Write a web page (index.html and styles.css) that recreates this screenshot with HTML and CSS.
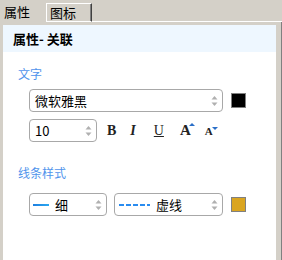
FILE: index.html
```html
<!DOCTYPE html>
<html lang="zh-CN">
<head>
    <meta charset="UTF-8">
    <title>属性面板</title>
    <link rel="stylesheet" href="styles.css">
</head>
<body>
    <div class="tabs">
        <div class="tab active">属性</div>
        <div class="tab">图标</div>
        <div class="tab-fill"></div>
    </div>

    <div class="frame">
        <div class="panel">
            <div class="panel-head">属性- 关联</div>

            <!-- 文字 -->
            <div class="section-title">文字</div>
            <div class="row row-font">
                <div class="select font-select">
                    <span class="select-text">微软雅黑</span>
                    <span class="spin"><svg width="7" height="12" viewBox="0 0 7 12"><path d="M3.5 1 L6.5 4.5 L0.5 4.5 Z" fill="#b0b0b0"/><path d="M0.5 7.5 L6.5 7.5 L3.5 11 Z" fill="#b0b0b0"/></svg></span>
                </div>
                <span class="swatch black"></span>
            </div>
            <div class="row row-style">
                <div class="select size-select">
                    <span class="select-text">10</span>
                    <span class="spin"><svg width="7" height="12" viewBox="0 0 7 12"><path d="M3.5 1 L6.5 4.5 L0.5 4.5 Z" fill="#b0b0b0"/><path d="M0.5 7.5 L6.5 7.5 L3.5 11 Z" fill="#b0b0b0"/></svg></span>
                </div>
                <span class="fmt fmt-b">B</span>
                <span class="fmt fmt-i">I</span>
                <span class="fmt fmt-u">U</span>
                <span class="fmt fmt-up">A<i class="tri up"></i></span>
                <span class="fmt fmt-down">A<i class="tri down"></i></span>
            </div>

            <!-- 线条样式 -->
            <div class="section-title line-title">线条样式</div>
            <div class="row row-line">
                <div class="select width-select">
                    <span class="line solid"></span>
                    <span class="select-text">细</span>
                    <span class="spin"><svg width="7" height="12" viewBox="0 0 7 12"><path d="M3.5 1 L6.5 4.5 L0.5 4.5 Z" fill="#b0b0b0"/><path d="M0.5 7.5 L6.5 7.5 L3.5 11 Z" fill="#b0b0b0"/></svg></span>
                </div>
                <div class="select dash-select">
                    <span class="line dashed"></span>
                    <span class="select-text">虚线</span>
                    <span class="spin"><svg width="7" height="12" viewBox="0 0 7 12"><path d="M3.5 1 L6.5 4.5 L0.5 4.5 Z" fill="#b0b0b0"/><path d="M0.5 7.5 L6.5 7.5 L3.5 11 Z" fill="#b0b0b0"/></svg></span>
                </div>
                <span class="swatch gold"></span>
            </div>
        </div>
    </div>
</body>
</html>
```

FILE: styles.css
```css
body {
    margin: 0;
    width: 282px;
    height: 260px;
    overflow: hidden;
    background-color: #d4d0c8;
    font-family: "Noto Sans CJK SC", "Liberation Sans", sans-serif;
    font-size: 12px;
    color: #000;
}

/* Tabs */
.tabs {
    display: flex;
    align-items: flex-start;
    height: 22px;
}

.tab {
    box-sizing: border-box;
    width: 46px;
    height: 19px;
    margin-top: 3px;
    padding-left: 3px;
    font-size: 13px;
    line-height: 17px;
    border-top: 1px solid #fff;
    border-left: 1px solid #fff;
    border-right: 1px solid #404040;
    border-bottom: 1px solid #fff;
    box-shadow: inset -1px 0 #808080;
}

.tab.active {
    margin-top: 0;
    height: 22px;
    padding: 3px 0 0 4px;
    line-height: 18px;
    border: none;
    box-shadow: none;
}

.tab-fill {
    flex: 1;
    height: 22px;
    box-sizing: border-box;
    border-bottom: 1px solid #fff;
}

/* Frame around the panel */
.frame {
    box-sizing: border-box;
    height: 238px;
    padding: 3px 5px 0 3px;
    border-right: 1px solid #808080;
    display: flex;
}

.panel {
    flex: 1;
    background-color: #fff;
}

.panel-head {
    height: 27px;
    line-height: 27px;
    padding-left: 10px;
    background-color: #eef7ff;
    font-size: 13px;
    font-weight: bold;
}

.section-title {
    margin: 13px 0 0 15px;
    line-height: 18px;
    color: #5094ec;
}

.line-title {
    margin-top: 22px;
}

.row {
    display: flex;
    align-items: center;
    padding-left: 26px;
}

.row-font {
    margin-top: 6px;
}

.row-style {
    margin-top: 7px;
}

.row-line {
    margin-top: 11px;
}

/* Spin / combo boxes */
.select {
    box-sizing: border-box;
    height: 23px;
    display: flex;
    align-items: center;
    padding-left: 5px;
    border: 1px solid #a8a8a8;
    border-radius: 4px;
    background-color: #fff;
}

.select-text {
    flex: 1;
    font-size: 13px;
}

.spin {
    display: flex;
    width: 7px;
    margin-right: 4px;
}

.font-select {
    width: 194px;
}

.size-select {
    width: 68px;
}

.width-select {
    width: 78px;
    padding-left: 3px;
}

.dash-select {
    width: 109px;
    margin-left: 7px;
    padding-left: 4px;
}

.line {
    display: inline-block;
    height: 2px;
    margin-right: 6px;
}

.line.solid {
    width: 16px;
    background: linear-gradient(to right, #1e7ee0, #2aa8f0);
}

.line.dashed {
    width: 31px;
    background: repeating-linear-gradient(to right, #2a8cf0 0, #2a8cf0 5px, transparent 5px, transparent 7px);
}

.swatch {
    box-sizing: border-box;
    width: 15px;
    height: 15px;
    margin-left: 8px;
    border: 1px solid #808080;
}

.swatch.black {
    background-color: #000;
}

.swatch.gold {
    background-color: #daa520;
}

/* Format buttons */
.fmt {
    position: relative;
    font-family: "Liberation Serif", serif;
    font-size: 14px;
    color: #222;
}

.fmt-b {
    margin-left: 10px;
    font-weight: bold;
}

.fmt-i {
    margin-left: 14px;
    font-style: italic;
    font-weight: bold;
}

.fmt-u {
    margin-left: 18px;
    text-decoration: underline;
}

.fmt-up {
    margin-left: 16px;
    font-weight: bold;
    font-size: 15px;
}

.fmt-down {
    margin-left: 14px;
    font-size: 11px;
    font-weight: bold;
}

.tri {
    position: absolute;
    width: 0;
    height: 0;
    border-left: 3px solid transparent;
    border-right: 3px solid transparent;
}

.tri.up {
    top: 1px;
    right: -4px;
    border-bottom: 3px solid #2a6fc8;
}

.tri.down {
    top: 2px;
    right: -5px;
    border-top: 3px solid #2a6fc8;
}
```
